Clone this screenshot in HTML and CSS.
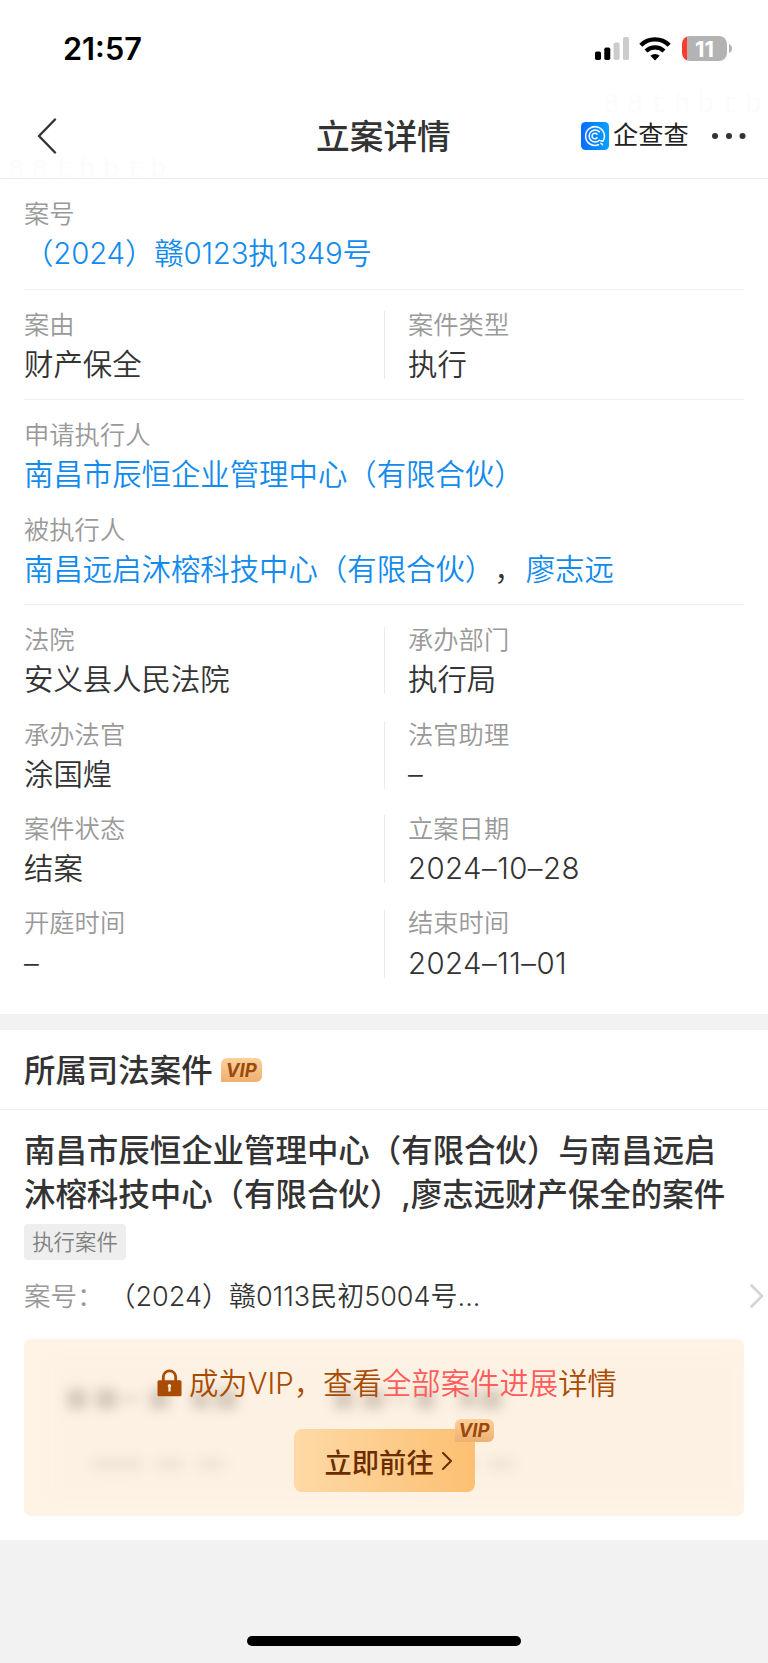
FILE: index.html
```html
<!DOCTYPE html>
<html lang="zh-CN">
<head>
  <meta charset="UTF-8">
  <title>立案详情</title>
  <meta name="viewport" content="width=device-width, initial-scale=1.0">
  <link rel="stylesheet" href="styles.css">
</head>
<body>
  <!-- 状态栏 -->
  <div class="status-bar">
    <span class="time">21:57</span>
    <div class="status-icons">
      <svg width="34" height="23" viewBox="0 0 34 23">
        <rect x="0" y="14.5" width="6" height="8.5" rx="1.7" fill="#000"/>
        <rect x="9.3" y="10.5" width="6" height="12.5" rx="1.7" fill="#000"/>
        <rect x="18.6" y="5.5" width="6" height="17.5" rx="1.7" fill="#ccc"/>
        <rect x="28" y="0" width="6" height="23" rx="1.7" fill="#ccc"/>
      </svg>
      <svg class="wifi" width="32" height="24" viewBox="0 0 32 24">
        <path d="M1.8 8.2a20.2 20.2 0 0 1 28.4 0" fill="none" stroke="#000" stroke-width="4.4"/>
        <path d="M7 14a12.8 12.8 0 0 1 18 0" fill="none" stroke="#000" stroke-width="4.2"/>
        <path d="M16 23.5l-4.6-4.7a6.6 6.6 0 0 1 9.2 0z" fill="#000"/>
      </svg>
      <div class="battery"><span>11</span></div>
      <svg width="3" height="9" viewBox="0 0 3 9"><path d="M0 0q3 1.2 3 4.5t-3 4.5z" fill="#b3b3b3"/></svg>
    </div>
  </div>

  <!-- 导航栏 -->
  <header class="nav">
    <svg class="back" width="20" height="36" viewBox="0 0 20 36">
      <path d="M18 1.5L2 18l16 16.5" fill="none" stroke="#333" stroke-width="2.4" stroke-linecap="round" stroke-linejoin="round"/>
    </svg>
    <h1>立案详情</h1>
    <div class="brand">
      <svg width="28" height="28" viewBox="0 0 28 28">
        <defs>
          <linearGradient id="logo" x1="0" x2="1"><stop offset="0" stop-color="#0a6cff"/><stop offset="1" stop-color="#06a2ff"/></linearGradient>
        </defs>
        <rect width="28" height="28" rx="4.5" fill="url(#logo)"/>
        <g fill="none" stroke="#fff" stroke-width="1.5" stroke-linecap="round">
          <path d="M17.5 22.8a9.4 9.4 0 1 1 4.4-3.6l-2.2-.4M20 21.2l1.6 1.6"/>
          <path d="M18.4 18.2a6 6 0 1 1 0-8.4"/>
          <path d="M16 15.8a2.8 2.8 0 1 1 0-3.6"/>
        </g>
      </svg>
      <span>企查查</span>
    </div>
    <svg class="more" width="36" height="8" viewBox="0 0 36 8" fill="#333">
      <circle cx="4" cy="4" r="3"/><circle cx="18" cy="4" r="3"/><circle cx="31.5" cy="4" r="3"/>
    </svg>
    <span class="mark mark-left">88thbtb</span>
    <span class="mark mark-right">88thbtb</span>
  </header>

  <!-- 立案信息 -->
  <main class="detail">
    <section class="group">
      <div class="field"><label>案号</label><a class="number">（2024）赣0123执1349号</a></div>
    </section>
    <section class="group cols">
      <div class="field"><label>案由</label><p>财产保全</p></div>
      <div class="field"><label>案件类型</label><p>执行</p></div>
    </section>
    <section class="group">
      <div class="field"><label>申请执行人</label><a>南昌市辰恒企业管理中心（有限合伙）</a></div>
      <div class="field"><label>被执行人</label><p><a>南昌远启沐榕科技中心（有限合伙）</a>，<a class="person">廖志远</a></p></div>
    </section>
    <section class="group cols">
      <div class="field"><label>法院</label><p>安义县人民法院</p></div>
      <div class="field"><label>承办部门</label><p>执行局</p></div>
      <div class="field"><label>承办法官</label><p>涂国煌</p></div>
      <div class="field"><label>法官助理</label><p>–</p></div>
      <div class="field"><label>案件状态</label><p>结案</p></div>
      <div class="field"><label>立案日期</label><p class="date">2024–10–28</p></div>
      <div class="field"><label>开庭时间</label><p>–</p></div>
      <div class="field"><label>结束时间</label><p class="date">2024–11–01</p></div>
    </section>
  </main>

  <!-- 所属司法案件 -->
  <section class="case">
    <div class="case-head">
      <h2>所属司法案件</h2>
      <span class="vip">VIP</span>
    </div>
    <div class="case-body">
      <h3>南昌市辰恒企业管理中心（有限合伙）与南昌远启<br>沐榕科技中心（有限合伙）,廖志远财产保全的案件</h3>
      <span class="tag">执行案件</span>
      <div class="case-no">
        <label>案号：</label>
        <span>（2024）赣0113民初5004号...</span>
        <svg class="arrow" width="14" height="24" viewBox="0 0 14 24">
          <path d="M1.5 1.5L12 12 1.5 22.5" fill="none" stroke="#d4d4d4" stroke-width="2.6" stroke-linecap="round" stroke-linejoin="round"/>
        </svg>
      </div>

      <div class="vip-box">
        <!-- 模糊的案件进展 -->
        <div class="blurred">
          <svg width="600" height="135" viewBox="0 0 600 135">
            <g fill="#d6cabc">
              <path d="M17 28h20v20H17zM46 28h21v20H46zM72 36h18v4H72zM100 28h19v20h-19zM142 28h17v20h-17zM165 28h22v20h-22z"/>
              <path d="M284 28h20v20h-20zM313 28h21v20h-21zM340 36h18v4h-18zM366 28h19v20h-19zM409 30h17v16h-17zM430 28h22v20h-22z"/>
            </g>
            <path d="M42 96h50v14H42zM106 96h28v14h-28zM148 96h26v14h-26zM400 96h26v14h-26zM438 96h26v14h-26z" fill="#f0e5d7"/>
          </svg>
        </div>
        <div class="vip-text">
          <svg width="25" height="28" viewBox="0 0 25 28">
            <path d="M6.3 12V8a6.2 6.2 0 0 1 12.4 0v4" fill="none" stroke="#a94b00" stroke-width="2.8"/>
            <rect x="0.5" y="11.3" width="24" height="16" rx="1.5" fill="#a94b00"/>
            <path d="M12.5 15a1.9 1.9 0 0 1 1.1 3.3v4.2h-2.2v-4.2a1.9 1.9 0 0 1 1.1-3.3z" fill="#fdf2e3"/>
          </svg>
          <p>成为VIP，查看<em>全部案件进展</em>详情</p>
        </div>
        <button class="go">
          <span>立即前往</span>
          <svg width="10" height="18" viewBox="0 0 10 18">
            <path d="M1 1l8 8-8 8" fill="none" stroke="#6b2d00" stroke-width="2" stroke-linecap="round" stroke-linejoin="round"/>
          </svg>
          <span class="vip">VIP</span>
        </button>
      </div>
    </div>
  </section>

  <footer><div class="home-bar"></div></footer>
</body>
</html>
```
FILE: styles.css
```css
* {
  box-sizing: border-box;
  margin: 0;
  padding: 0;
}

body {
  display: flex;
  flex-direction: column;
  width: 768px;
  height: 1663px;
  overflow: hidden;
  background: #f2f2f2;
  color: #333;
  font-family: Inter, "Noto Sans CJK SC", sans-serif;
  font-weight: 350;
  text-spacing-trim: space-all;
}

svg {
  display: block;
  flex: none;
}

/* 状态栏 */
.status-bar {
  display: flex;
  align-items: center;
  justify-content: space-between;
  height: 97px;
  padding: 0 36px 0 63px;
  background: #fff;
}

.time {
  padding-top: 1px;
  color: #000;
  font-size: 30.7px;
  font-weight: 600;
  line-height: 36px;
}

.status-icons {
  display: flex;
  align-items: center;
}

.wifi {
  margin: 0 11px 0 10px;
}

.battery {
  width: 45px;
  height: 25px;
  margin-right: 2px;
  border-radius: 8px;
  background: linear-gradient(to right, #ff3b30 5px, #b3b3b3 5px);
  color: #fff;
  font-size: 22px;
  font-weight: 700;
  line-height: 26px;
  text-align: center;
}

/* 导航栏 */
.nav {
  position: relative;
  display: flex;
  align-items: center;
  height: 82px;
  padding: 0 20px 3px 37px;
  border-bottom: 1px solid #ebebeb;
  background: #fff;
}

h1 {
  width: 140px;
  margin-left: 259px;
  padding-top: 2px;
  font-size: 33.7px;
  font-weight: 500;
  line-height: 40px;
  white-space: nowrap;
}

.brand {
  display: flex;
  align-items: center;
  gap: 4px;
  margin-left: 125px;
  color: #222;
  font-size: 25.2px;
  font-weight: 400;
  line-height: 30px;
}

.brand span {
  width: 76px;
  margin-top: -2px;
}

.more {
  margin-left: 22px;
}

.mark {
  position: absolute;
  color: #fcfcfc;
  font-family: "Liberation Mono", monospace;
  font-size: 27px;
  line-height: 24px;
  letter-spacing: 7.5px;
}

.mark-left {
  left: 8px;
  top: 61px;
}

.mark-right {
  left: 603px;
  top: -4px;
}

/* 立案信息 */
.detail {
  height: 835px;
  padding: 0 24px;
  background: #fff;
}

.group {
  display: grid;
  row-gap: 26.6px;
  padding: 21.5px 0 20.3px;
  border-bottom: 1px solid #eee;
}

.group:last-child {
  border-bottom: none;
}

.cols {
  grid-template-columns: 1fr 1fr;
}

.cols .field:nth-child(even) {
  padding-left: 23px;
  border-left: 1px solid #ebebeb;
}

.field {
  display: flex;
  flex-direction: column;
  justify-content: space-between;
  height: 67.8px;
  padding-top: 0.6px;
  font-size: 29.4px;
  line-height: 28px;
  white-space: nowrap;
}

label {
  color: #999;
  font-size: 25.3px;
  line-height: 25px;
}

a {
  color: #128bed;
}

.number {
  letter-spacing: -0.15px;
}

.date {
  letter-spacing: 0.45px;
}

.person {
  margin-left: 2px;
}

/* 所属司法案件 */
.case {
  height: 510px;
  margin-top: 16px;
  background: #fff;
}

.case-head {
  display: flex;
  align-items: center;
  gap: 8px;
  height: 80px;
  padding-left: 24px;
  border-bottom: 1px solid #eee;
}

h2, h3 {
  font-size: 31.45px;
  font-weight: 500;
  line-height: 43.5px;
  white-space: nowrap;
}

h2 {
  padding-top: 4px;
}

.vip {
  width: 41px;
  height: 24px;
  border-radius: 6px 6px 6px 0;
  background: linear-gradient(to bottom, #fdd09b, #efb071);
  color: #9a4a0c;
  font-size: 18.5px;
  font-style: italic;
  font-weight: 700;
  line-height: 24px;
  text-align: center;
}

.case-body {
  padding: 20px 24px 0;
}

.tag {
  display: block;
  width: 102px;
  height: 36px;
  margin-top: 7px;
  border-radius: 4px;
  background: #eee;
  color: #808080;
  font-size: 21.4px;
  line-height: 36px;
  text-align: center;
}

.case-no {
  display: flex;
  align-items: center;
  height: 36px;
  margin: 18px -20px 0 0;
  font-size: 27px;
  line-height: 35px;
}

.case-no label {
  margin-right: 5px;
  font-size: 26.5px;
  line-height: 34px;
}

.arrow {
  margin-left: auto;
}

.vip-box {
  position: relative;
  display: flex;
  flex-direction: column;
  align-items: center;
  height: 177px;
  margin-top: 25px;
  padding-top: 26px;
  border-radius: 7px;
  background: #fef3e5;
}

/* 盖在提示文字下面的模糊层 */
.blurred {
  position: absolute;
  inset: 22px 6px 20px 26px;
  overflow: hidden;
  background: #fcf1e3;
  filter: blur(6px);
}

.vip-text {
  position: relative;
  display: flex;
  align-items: center;
  gap: 7px;
  margin-left: 6px;
  color: #a94b00;
  font-size: 29.4px;
  line-height: 38px;
  white-space: nowrap;
}

.vip-text svg {
  margin-top: -3px;
}

.vip-text em {
  color: #ff5c5c;
  font-style: normal;
}

.go {
  position: relative;
  display: flex;
  align-items: center;
  gap: 8px;
  width: 181px;
  height: 63px;
  margin-top: 26px;
  padding: 0 0 0 31px;
  border: none;
  border-radius: 8px;
  background: linear-gradient(to right, #fed9a6, #fcc072);
  color: #6b2d00;
  font-family: inherit;
  font-size: 27.3px;
  font-weight: 500;
}

.go .vip {
  position: absolute;
  top: -10px;
  right: -19px;
  width: 39px;
  height: 23px;
  line-height: 23px;
}

/* 底部横条 */
footer {
  display: flex;
  justify-content: center;
  padding-top: 96px;
}

.home-bar {
  width: 274px;
  height: 10px;
  border-radius: 5px;
  background: #000;
}
```
